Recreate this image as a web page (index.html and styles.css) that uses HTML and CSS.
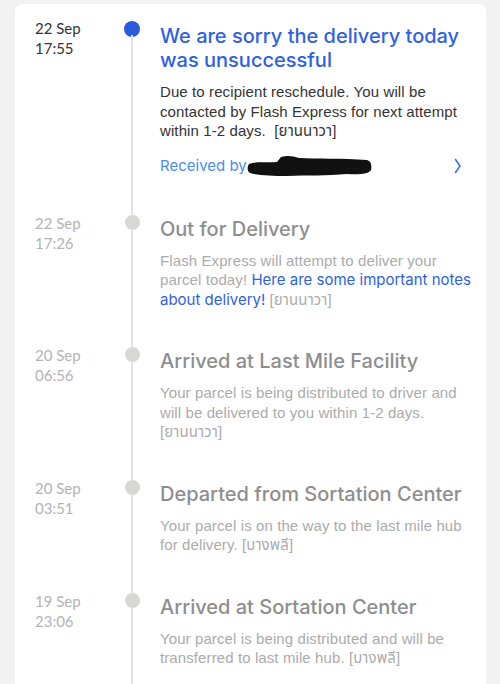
FILE: index.html
```html
<!DOCTYPE html>
<html lang="en">
<head>
<meta charset="utf-8">
<title>Tracking</title>
<link rel="stylesheet" href="styles.css">
</head>
<body>
<div class="card">
  <div class="item item-first">
    <div class="date date-active">22 Sep<br>17:55</div>
    <div class="rail"><span class="dot dot-active"></span><span class="line"></span></div>
    <div class="content">
      <div class="title title-active">We are sorry the delivery today was unsuccessful</div>
      <div class="desc desc-active">Due to recipient reschedule. You will be contacted by Flash Express for next attempt within 1-2 days.&nbsp; [ยานนาวา]</div>
      <div class="received">
        <span class="received-text">Received by</span>
        <svg class="redact" width="126" height="24" viewBox="0 0 126 24"><path d="M2 10 C10 7 20 9 30 8 L34 3 C40 1 46 2 52 4 C70 5 95 4 120 6 C124 7 125 11 124 16 C122 20 112 21 100 20 C80 22 60 21 40 22 C25 22 10 21 3 19 C0 17 0 13 2 10 Z" fill="#111"/></svg>
        <svg class="chev" width="8" height="16" viewBox="0 0 8 16"><path d="M1.5 1.5 L6 8 L1.5 14.5" fill="none" stroke="#3b74ea" stroke-width="1.6" stroke-linecap="round" stroke-linejoin="round"/></svg>
      </div>
    </div>
  </div>

  <div class="item">
    <div class="date">22 Sep<br>17:26</div>
    <div class="rail"><span class="line-top"></span><span class="dot"></span><span class="line"></span></div>
    <div class="content">
      <div class="title">Out for Delivery</div>
      <div class="desc">Flash Express will attempt to deliver your parcel today! <span class="link">Here are some important notes about delivery!</span> [ยานนาวา]</div>
    </div>
  </div>

  <div class="item">
    <div class="date">20 Sep<br>06:56</div>
    <div class="rail"><span class="line-top"></span><span class="dot"></span><span class="line"></span></div>
    <div class="content">
      <div class="title">Arrived at Last Mile Facility</div>
      <div class="desc">Your parcel is being distributed to driver and will be delivered to you within 1-2 days. [ยานนาวา]</div>
    </div>
  </div>

  <div class="item">
    <div class="date">20 Sep<br>03:51</div>
    <div class="rail"><span class="line-top"></span><span class="dot"></span><span class="line"></span></div>
    <div class="content">
      <div class="title">Departed from Sortation Center</div>
      <div class="desc">Your parcel is on the way to the last mile hub for delivery. [บางพลี]</div>
    </div>
  </div>

  <div class="item">
    <div class="date">19 Sep<br>23:06</div>
    <div class="rail"><span class="line-top"></span><span class="dot"></span><span class="line"></span></div>
    <div class="content">
      <div class="title">Arrived at Sortation Center</div>
      <div class="desc">Your parcel is being distributed and will be transferred to last mile hub. [บางพลี]</div>
    </div>
  </div>
</div>
</body>
</html>
```

FILE: styles.css
```css
html, body {
  margin: 0;
  padding: 0;
  background: #f2f2f2;
}

body {
  padding: 4px 14px 0 15px;
  height: 684px;
  box-sizing: border-box;
  overflow: hidden;
}

.card {
  background: #ffffff;
  border-radius: 8px 8px 0 0;
  padding: 14px 10px 0 20px;
  min-height: 700px;
}

.item {
  display: grid;
  grid-template-columns: 89px 16px 1fr;
}

.date {
  font-family: "Lato", "Noto Sans", sans-serif;
  font-size: 15px;
  line-height: 20px;
  color: #b3b3b3;
}

.date-active {
  color: #333333;
}

.rail {
  display: flex;
  flex-direction: column;
  align-items: center;
}

.line-top {
  width: 2px;
  height: 2px;
  background: #e3e3e3;
  flex: none;
}

.item-first .rail {
  padding-top: 3px;
}

.dot {
  width: 15px;
  height: 15px;
  border-radius: 50%;
  background: #d6d8d6;
  flex: none;
}

.dot-active {
  width: 16px;
  height: 16px;
  background: #2b5bdc;
  margin-bottom: -2px;
}

.line {
  width: 2px;
  flex: 1;
  background: #e3e3e3;
}

.content {
  margin-left: 20px;
  padding-top: 4px;
  padding-bottom: 36px;
}

.item-first .content {
  padding-top: 6px;
  padding-bottom: 37px;
}

.title {
  font-family: "Inter", "Lato", sans-serif;
  font-size: 20px;
  line-height: 24px;
  font-weight: 500;
  color: #8e8e8e;
}

.title-active {
  color: #2f5fe3;
}

.desc {
  margin-top: 10px;
  font-family: "Liberation Sans", Arial, "Noto Sans Thai", sans-serif;
  font-size: 15px;
  line-height: 19.5px;
  letter-spacing: 0.1px;
  color: #ababab;
}

.desc-active {
  color: #333333;
}

.link {
  font-family: "Inter", "Lato", sans-serif;
  letter-spacing: 0;
  color: #2f5fe3;
}

.received {
  margin-top: 15px;
  display: flex;
  align-items: center;
  height: 20px;
}

.received-text {
  font-family: "Inter", "Lato", sans-serif;
  font-size: 15px;
  line-height: 20px;
  color: #4a8cf0;
}

.redact {
  margin-left: 0;
  flex: none;
}

.chev {
  margin-left: auto;
  margin-right: 14px;
  flex: none;
}
```
